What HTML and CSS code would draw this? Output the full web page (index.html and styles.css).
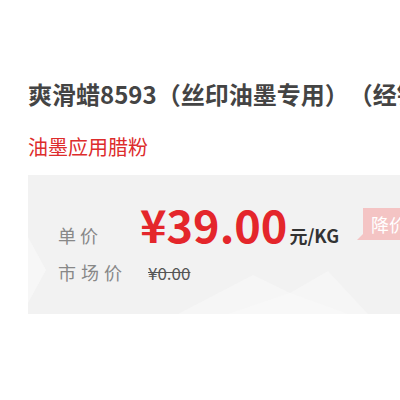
FILE: index.html
```html
<!DOCTYPE html>
<html>
<head>
    <title>爽滑蜡8593</title>
    <link rel="stylesheet" href="styles.css">
</head>
<body>
    <div class="product-info">
        <h1 class="product-name">爽滑蜡8593（丝印油墨专用）（经销）</h1>
        <p class="product-tag">油墨应用腊粉</p>

        <div class="price-box">
            <svg class="price-bg" width="400" height="139" viewBox="0 0 400 139">
                <polygon points="0,62 18,95 0,128" fill="#f7f7f7"/>
                <polygon points="150,139 225,100 262,118 300,96 340,139" fill="#f6f6f6"/>
                <polygon points="200,139 262,118 320,139" fill="#f8f8f8"/>
            </svg>
            <div class="price-row">
                <span class="label">单价</span>
                <span class="price">¥39.00</span>
                <span class="unit">元/KG</span>
                <span class="badge">降价通知</span>
            </div>
            <div class="price-row market">
                <span class="label">市场价</span>
                <span class="old-price">¥0.00</span>
            </div>
        </div>
    </div>
</body>
</html>
```

FILE: styles.css
```css
html, body {
    overflow: hidden;
}
body {
    margin: 0;
    background: #fff;
    font-family: "Noto Sans CJK SC", "Noto Sans", sans-serif;
}
.product-info {
    padding: 77px 0 0 28px;
    width: 600px;
}
.product-name {
    margin: 0;
    font-size: 24px;
    line-height: 34px;
    font-weight: bold;
    color: #444;
    white-space: nowrap;
    text-spacing-trim: space-all;
}
.product-tag {
    margin: 22px 0 0;
    font-size: 20px;
    line-height: 28px;
    color: #dd2c2c;
}
.price-box {
    position: relative;
    margin-top: 14px;
    height: 139px;
    background: #f2f2f2;
    padding: 23px 0 0 30px;
    box-sizing: border-box;
}
.price-bg {
    position: absolute;
    left: 0;
    top: 0;
}
.price-row {
    position: relative;
    display: flex;
    align-items: baseline;
}
.label {
    width: 82px;
    font-size: 18px;
    letter-spacing: 4px;
    color: #888;
}
.price {
    font-size: 45px;
    line-height: 52px;
    font-weight: bold;
    color: #e4262b;
}
.unit {
    font-size: 18px;
    font-weight: bold;
    color: #333;
    margin-left: 2px;
}
.badge {
    position: relative;
    margin-left: 24px;
    padding: 3px 8px;
    font-size: 18px;
    color: #fff;
    background: #f4c4c4;
    align-self: center;
}
.badge::before {
    content: "";
    position: absolute;
    left: -6px;
    bottom: 0;
    border-right: 6px solid #f4c4c4;
    border-top: 6px solid transparent;
}
.market {
    margin-top: 9px;
}
.market .label {
    letter-spacing: 5px;
    width: 90px;
}
.old-price {
    font-size: 17px;
    color: #555;
    text-decoration: line-through;
}
```
